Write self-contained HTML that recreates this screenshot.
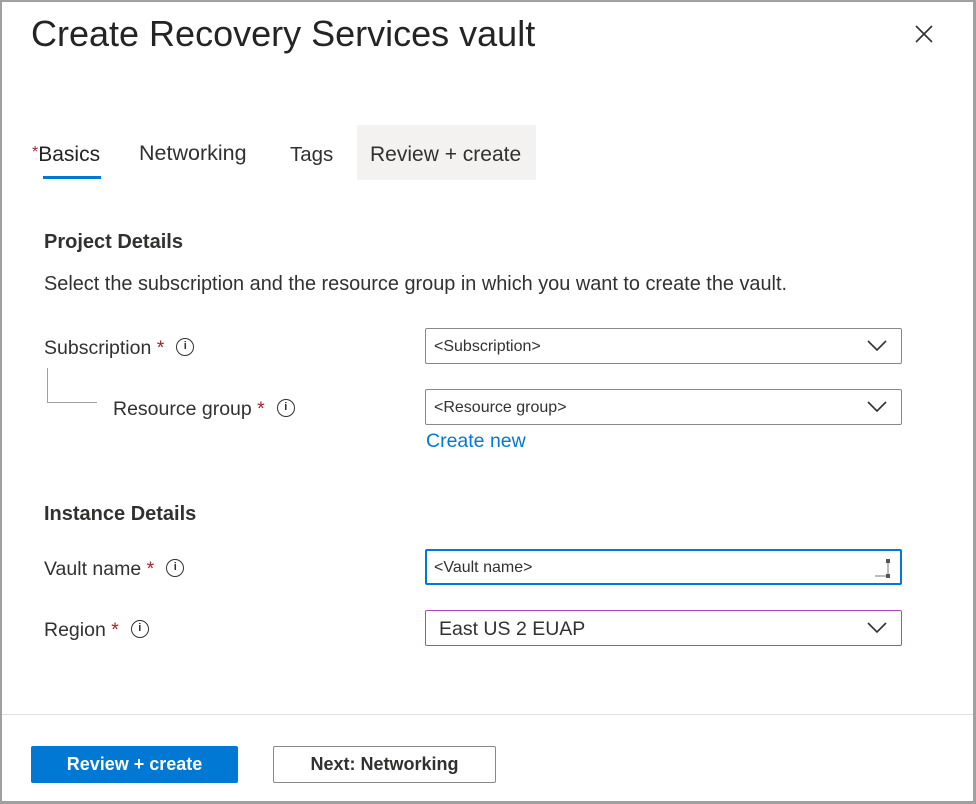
<!DOCTYPE html>
<html><head><style>
*{margin:0;padding:0;box-sizing:border-box}
body{width:976px;height:804px;background:#fff;font-family:"Liberation Sans",sans-serif;color:#323130;position:relative;overflow:hidden}
.frame{position:absolute;left:0;top:0;width:976px;height:804px;border:2px solid #a0a0a0;border-right-width:3px;border-bottom-width:3px}
.a{position:absolute;white-space:nowrap}
.lbl{font-size:19.5px;color:#323130}
.req{color:#a4262c}
.info{display:inline-block;width:18px;height:18px;border:1.3px solid #323130;border-radius:50%;font-size:11px;text-align:center;line-height:15px;font-weight:bold;vertical-align:middle;margin-left:12px;position:relative;top:-2px}
.box{position:absolute;left:425px;width:477px;height:36px;border:1px solid #8a8886;border-radius:2px;font-size:16px;padding-left:8px;line-height:36px}
.chev{position:absolute;right:14px;top:11px}
</style></head><body>
<div class="frame"></div>
<div class="a" style="left:31px;top:13px;font-size:36px;color:#252423">Create Recovery Services vault</div>
<svg class="a" style="left:914px;top:24px" width="20" height="20"><path d="M2 2L18 18M18 2L2 18" stroke="#323130" stroke-width="1.6"/></svg>
<div class="a" style="left:357px;top:125px;width:179px;height:55px;background:#f3f2f1"></div>
<div class="a" style="left:32px;top:143px;font-size:21px;color:#252423"><span class="req" style="font-size:16px;position:relative;top:-4px">*</span>Basics</div>
<div class="a" style="left:43px;top:176px;width:58px;height:3px;background:#0078d4"></div>
<div class="a" style="left:139px;top:141px;font-size:21.5px;line-height:24px">Networking</div>
<div class="a" style="left:290px;top:143px;font-size:20.5px;line-height:24px">Tags</div>
<div class="a" style="left:370px;top:143px;font-size:21px;line-height:24px">Review + create</div>
<div class="a" style="left:44px;top:231px;font-size:20px;font-weight:bold;color:#323130">Project Details</div>
<div class="a" style="left:44px;top:273px;font-size:19.9px">Select the subscription and the resource group in which you want to create the vault.</div>
<div class="a lbl" style="left:44px;top:337px">Subscription <span class="req">*</span><span class="info">i</span></div>
<div class="a" style="left:47px;top:368px;width:50px;height:35px;border-left:1px solid #a0a0a0;border-bottom:1px solid #a0a0a0"></div>
<div class="a lbl" style="left:113px;top:398px">Resource group <span class="req">*</span><span class="info">i</span></div>
<div class="box" style="top:328px">&lt;Subscription&gt;<svg class="chev" width="20" height="12"><path d="M1 1L10 10L19 1" fill="none" stroke="#323130" stroke-width="1.6"/></svg></div>
<div class="box" style="top:389px">&lt;Resource group&gt;<svg class="chev" width="20" height="12"><path d="M1 1L10 10L19 1" fill="none" stroke="#323130" stroke-width="1.6"/></svg></div>
<div class="a" style="left:426px;top:430px;font-size:19.5px;color:#0078d4">Create new</div>
<div class="a" style="left:44px;top:503px;font-size:20px;font-weight:bold">Instance Details</div>
<div class="a lbl" style="left:44px;top:558px">Vault name <span class="req">*</span><span class="info">i</span></div>
<div class="box" style="top:549px;border:2px solid #0078d4;line-height:34px;padding-left:7px">&lt;Vault name&gt;<svg class="a" style="right:8px;top:8px" width="18" height="20"><path d="M14 2V18M1 17H14" stroke="#777" stroke-width="1"/><rect x="12" y="0" width="4" height="4" fill="#555"/><rect x="12" y="15" width="4" height="4" fill="#555"/></svg></div>
<div class="a lbl" style="left:44px;top:619px">Region <span class="req">*</span><span class="info">i</span></div>
<div class="box" style="top:610px;border-color:#b146c2;font-size:19.5px;padding-left:13px">East US 2 EUAP<svg class="chev" width="20" height="12"><path d="M1 1L10 10L19 1" fill="none" stroke="#323130" stroke-width="1.6"/></svg></div>
<div class="a" style="left:2px;top:714px;width:971px;height:1px;background:#e1dfdd"></div>
<div class="a" style="left:31px;top:746px;width:207px;height:37px;background:#0078d4;border-radius:2px;color:#fff;font-size:18px;font-weight:bold;text-align:center;line-height:36px">Review + create</div>
<div class="a" style="left:273px;top:746px;width:223px;height:37px;border:1px solid #8a8886;border-radius:2px;font-size:18px;font-weight:bold;text-align:center;line-height:35px;color:#323130">Next: Networking</div>
</body></html>
